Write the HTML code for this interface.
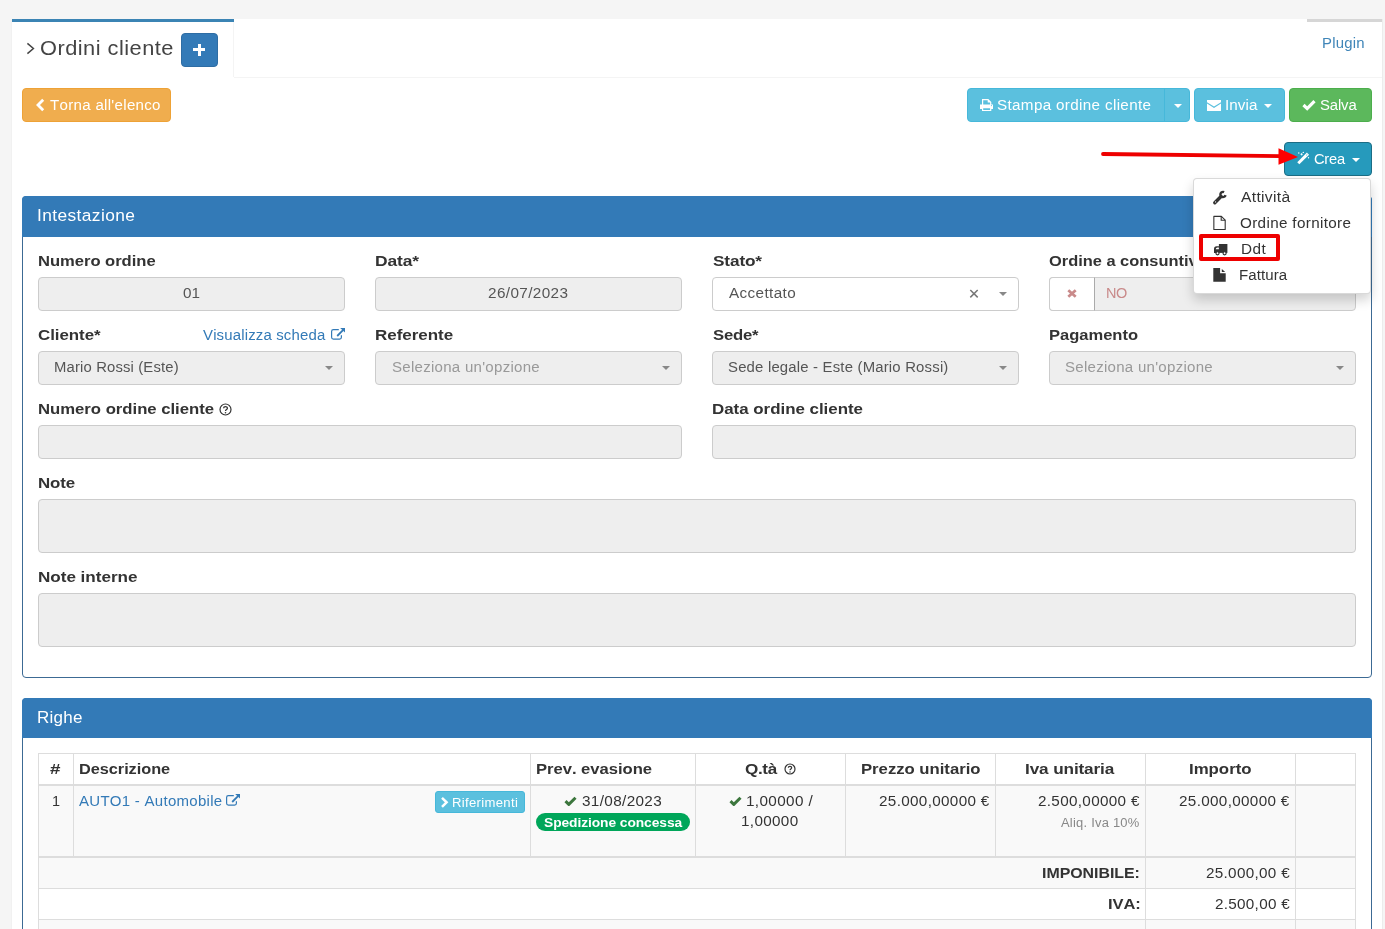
<!DOCTYPE html>
<html><head><meta charset="utf-8"><title>Ordini cliente</title>
<style>
html,body{margin:0;padding:0;}
body{width:1385px;height:929px;overflow:hidden;position:relative;background:#f5f5f5;font-family:"Liberation Sans",sans-serif;font-kerning:none;}
body>div{position:absolute;}
.t{white-space:nowrap;will-change:transform;transform-origin:0 0;}
</style></head><body>
<div style="left:12px;top:19px;width:1370px;height:910px;background:#fff;box-shadow:0 1px 1px rgba(0,0,0,.1);"></div>
<div style="left:1382px;top:19px;width:1px;height:910px;background:#ececec;"></div>
<div style="left:12px;top:19px;width:222px;height:3px;background:#3b84b4;"></div>
<div style="left:233px;top:22px;width:1px;height:55px;background:#f4f4f4;"></div>
<div style="left:234px;top:77px;width:1148px;height:1px;background:#f4f4f4;"></div>
<div style="left:1307px;top:19px;width:75px;height:3px;background:#d6d6d6;"></div>
<div class="t" style="left:1322.37px;top:35.73px;font-size:14.49px;line-height:14.49px;letter-spacing:0.179px;transform:scaleX(1.0320);color:#3f85b8;">Plugin</div>
<svg style="position:absolute;left:26px;top:42px;" width="10" height="14" viewBox="0 0 10 14"><path d="M1.4 1.4L7.4 6.5L1.4 11.6" stroke="#444" stroke-width="1.5" fill="none"/></svg>
<div class="t" style="left:40.27px;top:38.18px;font-size:20.7px;line-height:20.7px;letter-spacing:0.457px;transform:scaleX(1.0533);color:#444;">Ordini cliente</div>
<div style="left:181px;top:33px;width:37px;height:34px;background:#337ab7;border:1px solid #2e6da4;border-radius:4px;box-sizing:border-box;"></div>
<div style="left:193px;top:48px;width:12px;height:3px;background:#fff;"></div>
<div style="left:197.5px;top:44px;width:3.0px;height:11.5px;background:#fff;"></div>
<div style="left:22px;top:88px;width:149px;height:34px;background:#f0ad4e;border:1px solid #eea236;border-radius:4px;box-sizing:border-box;"></div>
<svg style="position:absolute;left:35px;top:98px;" width="11" height="14" viewBox="0 0 11 14"><path d="M8.2 1.8L3 7L8.2 12.2" stroke="#fff" stroke-width="2.8" fill="none"/></svg>
<div class="t" style="left:49.96px;top:98.23px;font-size:14.49px;line-height:14.49px;letter-spacing:0.284px;transform:scaleX(1.0418);color:#fff;">Torna all&#x27;elenco</div>
<div style="left:967px;top:88px;width:223px;height:34px;background:#5bc0de;border:1px solid #46b8da;border-radius:4px;box-sizing:border-box;"></div>
<div style="left:1164px;top:88px;width:1px;height:34px;background:#46b8da;"></div>
<svg style="position:absolute;left:980px;top:99px;" width="13" height="13" viewBox="0 0 13 13"><path fill-rule="evenodd" d="M2 0H8.3L11.3 3V5.6H13V10H11.3V12H2V10H0V5.6H2Z M3.2 1.2V5.6H10.1V3.6H7.7V1.2Z M3.2 9.3V10.9H10.1V9.3Z" fill="#fff"/><circle cx="11.4" cy="6.6" r="0.55" fill="#5bc0de"/></svg>
<div class="t" style="left:997.11px;top:98.23px;font-size:14.49px;line-height:14.49px;letter-spacing:0.324px;transform:scaleX(1.0507);color:#fff;">Stampa ordine cliente</div>
<svg style="position:absolute;left:1173.5px;top:104.0px;" width="8" height="4" viewBox="0 0 8 4"><path d="M0 0H8L4.0 4Z" fill="#fff"/></svg>
<div style="left:1194px;top:88px;width:91px;height:34px;background:#5bc0de;border:1px solid #46b8da;border-radius:4px;box-sizing:border-box;"></div>
<svg style="position:absolute;left:1207px;top:100px;" width="14" height="11" viewBox="0 0 14 11"><path d="M0 0H14V2.2L7 6.6L0 2.2Z M0 3.6L7 8L14 3.6V11H0Z" fill="#fff"/></svg>
<div class="t" style="left:1224.59px;top:98.23px;font-size:14.49px;line-height:14.49px;letter-spacing:0.080px;transform:scaleX(1.0514);color:#fff;">Invia</div>
<svg style="position:absolute;left:1264.0px;top:104.0px;" width="8" height="4" viewBox="0 0 8 4"><path d="M0 0H8L4.0 4Z" fill="#fff"/></svg>
<div style="left:1289px;top:88px;width:83px;height:34px;background:#5cb85c;border:1px solid #4cae4c;border-radius:4px;box-sizing:border-box;"></div>
<svg style="position:absolute;left:1302px;top:99px;" width="14" height="12" viewBox="0 0 14 12"><path d="M1.5 6L5.2 9.6L12.5 2.2" stroke="#fff" stroke-width="3.2" fill="none"/></svg>
<div class="t" style="left:1320.32px;top:98.23px;font-size:14.49px;line-height:14.49px;letter-spacing:-0.129px;transform:scaleX(1.0272);color:#fff;">Salva</div>
<div style="left:1284px;top:142px;width:88px;height:34px;background:#269abc;border:1px solid #1b6d85;border-radius:4px;box-sizing:border-box;"></div>
<svg style="position:absolute;left:1296px;top:150px;" width="16" height="16" viewBox="0 0 16 16"><path d="M2.3 13.3L12 3.6" stroke="#fff" stroke-width="3"/><path d="M10.4 5.2L11.3 4.3" stroke="#269abc" stroke-width="1"/><circle cx="2.8" cy="3" r="0.7" fill="#fff"/><path d="M5.6 3.2V5.4M4.5 4.3H6.7" stroke="#fff" stroke-width="0.9"/><circle cx="7.3" cy="2.4" r="0.7" fill="#fff"/><circle cx="12.5" cy="7.8" r="0.7" fill="#fff"/></svg>
<div class="t" style="left:1313.65px;top:152.23px;font-size:14.49px;line-height:14.49px;letter-spacing:-0.264px;transform:scaleX(1.0161);color:#fff;">Crea</div>
<svg style="position:absolute;left:1351.5px;top:158.0px;" width="8" height="4" viewBox="0 0 8 4"><path d="M0 0H8L4.0 4Z" fill="#fff"/></svg>
<div style="left:22px;top:196px;width:1350px;height:482px;border:1px solid #3c6a94;border-radius:4px;box-sizing:border-box;background:#fff;"></div>
<div style="left:22px;top:196px;width:1350px;height:41px;background:#337ab7;border-radius:4px 4px 0 0;"></div>
<div class="t" style="left:37.10px;top:207.68px;font-size:16.56px;line-height:16.56px;letter-spacing:0.373px;transform:scaleX(1.0488);color:#fff;">Intestazione</div>
<div class="t" style="left:38.18px;top:254.23px;font-size:14.49px;line-height:14.49px;letter-spacing:-0.021px;transform:scaleX(1.1448);color:#333;font-weight:bold;">Numero ordine</div>
<div style="left:38px;top:277px;width:307px;height:34px;background:#eee;border:1px solid #ccc;border-radius:4px;box-sizing:border-box;"></div>
<div class="t" style="left:182.92px;top:285.73px;font-size:14.49px;line-height:14.49px;letter-spacing:-0.024px;transform:scaleX(1.0526);color:#555;">01</div>
<div class="t" style="left:375.12px;top:254.23px;font-size:14.49px;line-height:14.49px;letter-spacing:-0.080px;transform:scaleX(1.2020);color:#333;font-weight:bold;">Data*</div>
<div style="left:375px;top:277px;width:307px;height:34px;background:#eee;border:1px solid #ccc;border-radius:4px;box-sizing:border-box;"></div>
<div class="t" style="left:488.41px;top:285.73px;font-size:14.49px;line-height:14.49px;letter-spacing:0.356px;transform:scaleX(1.0563);color:#555;">26/07/2023</div>
<div class="t" style="left:712.51px;top:254.23px;font-size:14.49px;line-height:14.49px;letter-spacing:-0.130px;transform:scaleX(1.1909);color:#333;font-weight:bold;">Stato*</div>
<div style="left:712px;top:277px;width:307px;height:34px;background:#fff;border:1px solid #ccc;border-radius:4px;box-sizing:border-box;"></div>
<div class="t" style="left:728.97px;top:285.73px;font-size:14.49px;line-height:14.49px;letter-spacing:0.364px;transform:scaleX(1.0542);color:#555;">Accettato</div>
<svg style="position:absolute;left:969px;top:289px;" width="10" height="10" viewBox="0 0 10 10"><path d="M1.3 1L8.7 8.4M8.7 1L1.3 8.4" stroke="#777" stroke-width="1.5"/></svg>
<svg style="position:absolute;left:999.0px;top:291.5px;" width="8" height="4" viewBox="0 0 8 4"><path d="M0 0H8L4.0 4Z" fill="#888"/></svg>
<div class="t" style="left:1049.02px;top:254.23px;font-size:14.49px;line-height:14.49px;letter-spacing:0.001px;transform:scaleX(1.1326);color:#333;font-weight:bold;">Ordine a consuntivo</div>
<div style="left:1049px;top:277px;width:307px;height:34px;background:#eee;border:1px solid #ccc;border-radius:4px;box-sizing:border-box;"></div>
<div style="left:1049px;top:277px;width:46px;height:34px;background:#fff;border:1px solid #ccc;border-right:1px solid #aaa;border-radius:4px 0 0 4px;box-sizing:border-box;"></div>
<svg style="position:absolute;left:1066px;top:288px;" width="12" height="11" viewBox="0 0 12 11"><path d="M2.3 2.3L9.7 8.7M9.7 2.3L2.3 8.7" stroke="#c98a8a" stroke-width="2.8"/></svg>
<div class="t" style="left:1106.32px;top:285.73px;font-size:14.49px;line-height:14.49px;letter-spacing:-0.412px;transform:scaleX(0.9944);color:#c98a8a;">NO</div>
<div class="t" style="left:38.00px;top:328.23px;font-size:14.49px;line-height:14.49px;letter-spacing:-0.033px;transform:scaleX(1.1649);color:#333;font-weight:bold;">Cliente*</div>
<div class="t" style="left:203.43px;top:328.23px;font-size:14.49px;line-height:14.49px;letter-spacing:0.151px;transform:scaleX(1.0330);color:#337ab7;">Visualizza scheda</div>
<svg style="position:absolute;left:330px;top:327px;" width="16" height="14" viewBox="0 0 16 14"><path d="M8.8 2.6H3.4Q1.6 2.6 1.6 4.4V10.3Q1.6 12.1 3.4 12.1H9.6Q11.4 12.1 11.4 10.3V8.2" stroke="#337ab7" stroke-width="1.2" fill="none"/><path d="M10.2 1H15V5.6Z" fill="#337ab7"/><path d="M7.2 9L13 3.2" stroke="#337ab7" stroke-width="1.8"/></svg>
<div style="left:38px;top:351px;width:307px;height:34px;background:#eee;border:1px solid #ccc;border-radius:4px;box-sizing:border-box;"></div>
<div class="t" style="left:54.28px;top:359.73px;font-size:14.49px;line-height:14.49px;letter-spacing:0.145px;transform:scaleX(1.0248);color:#555;">Mario Rossi (Este)</div>
<svg style="position:absolute;left:325.0px;top:366.0px;" width="8" height="4" viewBox="0 0 8 4"><path d="M0 0H8L4.0 4Z" fill="#888"/></svg>
<div class="t" style="left:375.15px;top:328.23px;font-size:14.49px;line-height:14.49px;letter-spacing:-0.026px;transform:scaleX(1.1732);color:#333;font-weight:bold;">Referente</div>
<div style="left:375px;top:351px;width:307px;height:34px;background:#eee;border:1px solid #ccc;border-radius:4px;box-sizing:border-box;"></div>
<div class="t" style="left:391.82px;top:359.73px;font-size:14.49px;line-height:14.49px;letter-spacing:0.256px;transform:scaleX(1.0391);color:#999;">Seleziona un&#x27;opzione</div>
<svg style="position:absolute;left:662.0px;top:366.0px;" width="8" height="4" viewBox="0 0 8 4"><path d="M0 0H8L4.0 4Z" fill="#888"/></svg>
<div class="t" style="left:712.52px;top:328.23px;font-size:14.49px;line-height:14.49px;letter-spacing:-0.171px;transform:scaleX(1.1526);color:#333;font-weight:bold;">Sede*</div>
<div style="left:712px;top:351px;width:307px;height:34px;background:#eee;border:1px solid #ccc;border-radius:4px;box-sizing:border-box;"></div>
<div class="t" style="left:728.32px;top:359.73px;font-size:14.49px;line-height:14.49px;letter-spacing:0.177px;transform:scaleX(1.0297);color:#555;">Sede legale - Este (Mario Rossi)</div>
<svg style="position:absolute;left:999.0px;top:366.0px;" width="8" height="4" viewBox="0 0 8 4"><path d="M0 0H8L4.0 4Z" fill="#888"/></svg>
<div class="t" style="left:1049.18px;top:328.23px;font-size:14.49px;line-height:14.49px;letter-spacing:-0.015px;transform:scaleX(1.1416);color:#333;font-weight:bold;">Pagamento</div>
<div style="left:1049px;top:351px;width:307px;height:34px;background:#eee;border:1px solid #ccc;border-radius:4px;box-sizing:border-box;"></div>
<div class="t" style="left:1065.32px;top:359.73px;font-size:14.49px;line-height:14.49px;letter-spacing:0.256px;transform:scaleX(1.0391);color:#999;">Seleziona un&#x27;opzione</div>
<svg style="position:absolute;left:1336.0px;top:366.0px;" width="8" height="4" viewBox="0 0 8 4"><path d="M0 0H8L4.0 4Z" fill="#888"/></svg>
<div class="t" style="left:38.17px;top:402.23px;font-size:14.49px;line-height:14.49px;letter-spacing:-0.012px;transform:scaleX(1.1530);color:#333;font-weight:bold;">Numero ordine cliente</div>
<svg style="position:absolute;left:219px;top:403px;" width="13" height="13" viewBox="0 0 13 13"><circle cx="6.5" cy="6.5" r="5.5" stroke="#333" stroke-width="1.2" fill="none"/><path d="M4.6 5.2C4.6 3.2 8.4 3.2 8.4 5.2C8.4 6.6 6.5 6.5 6.5 8" stroke="#333" stroke-width="1.3" fill="none"/><circle cx="6.5" cy="9.8" r="0.8" fill="#333"/></svg>
<div style="left:38px;top:425px;width:644px;height:34px;background:#eee;border:1px solid #ccc;border-radius:4px;box-sizing:border-box;"></div>
<div class="t" style="left:712.15px;top:402.23px;font-size:14.49px;line-height:14.49px;letter-spacing:-0.012px;transform:scaleX(1.1671);color:#333;font-weight:bold;">Data ordine cliente</div>
<div style="left:712px;top:425px;width:644px;height:34px;background:#eee;border:1px solid #ccc;border-radius:4px;box-sizing:border-box;"></div>
<div class="t" style="left:38.16px;top:476.23px;font-size:14.49px;line-height:14.49px;letter-spacing:-0.073px;transform:scaleX(1.1653);color:#333;font-weight:bold;">Note</div>
<div style="left:38px;top:499px;width:1318px;height:54px;background:#eee;border:1px solid #ccc;border-radius:4px;box-sizing:border-box;"></div>
<div class="t" style="left:38.14px;top:570.23px;font-size:14.49px;line-height:14.49px;letter-spacing:-0.018px;transform:scaleX(1.1796);color:#333;font-weight:bold;">Note interne</div>
<div style="left:38px;top:593px;width:1318px;height:54px;background:#eee;border:1px solid #ccc;border-radius:4px;box-sizing:border-box;"></div>
<div style="left:22px;top:698px;width:1350px;height:262px;border:1px solid #3c6a94;border-radius:4px;box-sizing:border-box;background:#fff;"></div>
<div style="left:22px;top:698px;width:1350px;height:40px;background:#337ab7;border-radius:4px 4px 0 0;"></div>
<div class="t" style="left:37.40px;top:709.98px;font-size:16.56px;line-height:16.56px;letter-spacing:0.231px;transform:scaleX(1.0281);color:#fff;">Righe</div>
<div style="left:38px;top:753px;width:1318px;height:33px;background:#fff;"></div>
<div style="left:38px;top:786px;width:1318px;height:72px;background:#f9f9f9;"></div>
<div style="left:38px;top:858px;width:1318px;height:31px;background:#f9f9f9;"></div>
<div style="left:38px;top:889px;width:1318px;height:31px;background:#fff;"></div>
<div style="left:38px;top:920px;width:1318px;height:40px;background:#f9f9f9;"></div>
<div style="left:38px;top:753px;width:1318px;height:1px;background:#ddd;"></div>
<div style="left:38px;top:784px;width:1318px;height:2px;background:#ddd;"></div>
<div style="left:38px;top:856px;width:1318px;height:2px;background:#ddd;"></div>
<div style="left:38px;top:888px;width:1318px;height:1px;background:#ddd;"></div>
<div style="left:38px;top:919px;width:1318px;height:1px;background:#ddd;"></div>
<div style="left:38px;top:753px;width:1px;height:207px;background:#ddd;"></div>
<div style="left:1355px;top:753px;width:1px;height:207px;background:#ddd;"></div>
<div style="left:73px;top:753px;width:1px;height:105px;background:#ddd;"></div>
<div style="left:530px;top:753px;width:1px;height:105px;background:#ddd;"></div>
<div style="left:695px;top:753px;width:1px;height:105px;background:#ddd;"></div>
<div style="left:845px;top:753px;width:1px;height:105px;background:#ddd;"></div>
<div style="left:995px;top:753px;width:1px;height:105px;background:#ddd;"></div>
<div style="left:1145px;top:753px;width:1px;height:207px;background:#ddd;"></div>
<div style="left:1295px;top:753px;width:1px;height:207px;background:#ddd;"></div>
<div class="t" style="left:50.26px;top:761.73px;font-size:14.49px;line-height:14.49px;letter-spacing:0.000px;transform:scaleX(1.2973);color:#333;font-weight:bold;">#</div>
<div class="t" style="left:79.19px;top:761.73px;font-size:14.49px;line-height:14.49px;letter-spacing:-0.028px;transform:scaleX(1.1247);color:#333;font-weight:bold;">Descrizione</div>
<div class="t" style="left:535.89px;top:761.73px;font-size:14.49px;line-height:14.49px;letter-spacing:-0.019px;transform:scaleX(1.1464);color:#333;font-weight:bold;">Prev. evasione</div>
<div class="t" style="left:745.42px;top:761.73px;font-size:14.49px;line-height:14.49px;letter-spacing:-0.320px;transform:scaleX(1.1838);color:#333;font-weight:bold;">Q.tà</div>
<svg style="position:absolute;left:783.5px;top:763px;" width="12" height="12" viewBox="0 0 12 12"><circle cx="6" cy="6" r="5" stroke="#333" stroke-width="1.2" fill="none"/><path d="M4.3 4.8C4.3 3 7.7 3 7.7 4.8C7.7 6 6 6 6 7.3" stroke="#333" stroke-width="1.2" fill="none"/><circle cx="6" cy="9" r="0.75" fill="#333"/></svg>
<div class="t" style="left:860.51px;top:761.73px;font-size:14.49px;line-height:14.49px;letter-spacing:-0.007px;transform:scaleX(1.1520);color:#333;font-weight:bold;">Prezzo unitario</div>
<div class="t" style="left:1025.20px;top:761.73px;font-size:14.49px;line-height:14.49px;letter-spacing:-0.103px;transform:scaleX(1.1853);color:#333;font-weight:bold;">Iva unitaria</div>
<div class="t" style="left:1188.99px;top:761.73px;font-size:14.49px;line-height:14.49px;letter-spacing:-0.015px;transform:scaleX(1.1618);color:#333;font-weight:bold;">Importo</div>
<div class="t" style="left:51.51px;top:793.73px;font-size:14.49px;line-height:14.49px;letter-spacing:0.000px;transform:scaleX(0.9727);color:#333;">1</div>
<div class="t" style="left:79.08px;top:793.73px;font-size:14.49px;line-height:14.49px;letter-spacing:0.264px;transform:scaleX(1.0363);color:#337ab7;">AUTO1 - Automobile</div>
<svg style="position:absolute;left:225px;top:793px;" width="16" height="14" viewBox="0 0 16 14"><path d="M8.8 2.6H3.4Q1.6 2.6 1.6 4.4V10.3Q1.6 12.1 3.4 12.1H9.6Q11.4 12.1 11.4 10.3V8.2" stroke="#337ab7" stroke-width="1.2" fill="none"/><path d="M10.2 1H15V5.6Z" fill="#337ab7"/><path d="M7.2 9L13 3.2" stroke="#337ab7" stroke-width="1.8"/></svg>
<div style="left:435px;top:791px;width:90px;height:22px;background:#5bc0de;border:1px solid #46b8da;border-radius:3px;box-sizing:border-box;"></div>
<svg style="position:absolute;left:440px;top:796px;" width="9" height="13" viewBox="0 0 9 13"><path d="M2 1.8L6.6 6.3L2 10.8" stroke="#fff" stroke-width="2.5" fill="none"/></svg>
<div class="t" style="left:451.92px;top:797.49px;font-size:12.42px;line-height:12.42px;letter-spacing:0.294px;transform:scaleX(1.0582);color:#fff;">Riferimenti</div>
<svg style="position:absolute;left:564px;top:796px;" width="13" height="11" viewBox="0 0 13 11"><path d="M1.5 5.2L4.8 8.4L11.5 1.8" stroke="#3c763d" stroke-width="3" fill="none" stroke-linejoin="round"/></svg>
<div class="t" style="left:581.92px;top:793.73px;font-size:14.49px;line-height:14.49px;letter-spacing:0.332px;transform:scaleX(1.0563);color:#333;">31/08/2023</div>
<div style="left:536px;top:813px;width:154px;height:18px;background:#00a65a;border-radius:9px;"></div>
<div class="t" style="left:543.56px;top:816.99px;font-size:12.42px;line-height:12.42px;letter-spacing:-0.075px;transform:scaleX(1.1129);color:#fff;font-weight:bold;">Spedizione concessa</div>
<svg style="position:absolute;left:728.5px;top:796px;" width="13" height="11" viewBox="0 0 13 11"><path d="M1.5 5.2L4.8 8.4L11.5 1.8" stroke="#3c763d" stroke-width="3" fill="none" stroke-linejoin="round"/></svg>
<div class="t" style="left:746.34px;top:793.73px;font-size:14.49px;line-height:14.49px;letter-spacing:0.349px;transform:scaleX(1.0549);color:#333;">1,00000 /</div>
<div class="t" style="left:741.43px;top:813.73px;font-size:14.49px;line-height:14.49px;letter-spacing:0.324px;transform:scaleX(1.0527);color:#333;">1,00000</div>
<div class="t" style="left:878.93px;top:793.73px;font-size:14.49px;line-height:14.49px;letter-spacing:0.317px;transform:scaleX(1.0527);color:#333;">25.000,00000 €</div>
<div class="t" style="left:1037.83px;top:793.73px;font-size:14.49px;line-height:14.49px;letter-spacing:0.309px;transform:scaleX(1.0527);color:#333;">2.500,00000 €</div>
<div class="t" style="left:1061.46px;top:816.79px;font-size:12.42px;line-height:12.42px;letter-spacing:0.223px;transform:scaleX(1.0422);color:#888;">Aliq. Iva 10%</div>
<div class="t" style="left:1178.93px;top:793.73px;font-size:14.49px;line-height:14.49px;letter-spacing:0.317px;transform:scaleX(1.0527);color:#333;">25.000,00000 €</div>
<div class="t" style="left:1042.03px;top:865.73px;font-size:14.49px;line-height:14.49px;letter-spacing:-0.023px;transform:scaleX(1.0989);color:#333;font-weight:bold;">IMPONIBILE:</div>
<div class="t" style="left:1205.65px;top:865.73px;font-size:14.49px;line-height:14.49px;letter-spacing:0.291px;transform:scaleX(1.0527);color:#333;">25.000,00 €</div>
<div class="t" style="left:1108.39px;top:896.73px;font-size:14.49px;line-height:14.49px;letter-spacing:-0.046px;transform:scaleX(1.1391);color:#333;font-weight:bold;">IVA:</div>
<div class="t" style="left:1214.56px;top:896.73px;font-size:14.49px;line-height:14.49px;letter-spacing:0.278px;transform:scaleX(1.0527);color:#333;">2.500,00 €</div>
<div style="left:1193px;top:178px;width:178px;height:116px;background:#fff;border:1px solid rgba(0,0,0,.15);border-radius:4px;box-sizing:border-box;box-shadow:0 6px 12px rgba(0,0,0,.175);"></div>
<svg style="position:absolute;left:1208px;top:186px;" width="24" height="22" viewBox="0 0 24 22"><path d="M6.8 16.7L13 10.5" stroke="#333" stroke-width="3.4" stroke-linecap="round"/><path d="M17.51 9.17A2.6 2.6 0 1 1 16.10 6.14" stroke="#333" stroke-width="2.4" fill="none"/><circle cx="7.6" cy="15.9" r="0.6" fill="#fff"/></svg>
<div class="t" style="left:1241.47px;top:189.73px;font-size:14.49px;line-height:14.49px;letter-spacing:0.282px;transform:scaleX(1.0800);color:#333;">Attività</div>
<svg style="position:absolute;left:1213px;top:215px;" width="14" height="16" viewBox="0 0 14 16"><path d="M0.85 1.4H8.4L12.2 5.2V14.5H0.85Z" stroke="#333" stroke-width="1.1" fill="none" stroke-linejoin="round"/><path d="M8.2 1.4V5.3H12.2" stroke="#333" stroke-width="1.1" fill="none"/></svg>
<div class="t" style="left:1239.78px;top:215.73px;font-size:14.49px;line-height:14.49px;letter-spacing:0.323px;transform:scaleX(1.0519);color:#333;">Ordine fornitore</div>
<svg style="position:absolute;left:1213px;top:243px;" width="16" height="13" viewBox="0 0 16 13"><path d="M5.9 1H14.4V9.9H5.9Z" fill="#333"/><path d="M1 9.9V5.8Q1 3.2 3.5 3.2H6V9.9Z" fill="#333"/><path d="M2.7 6.3Q2.9 4.5 4.3 4.5H5.9V6.3Z" fill="#fff"/><circle cx="4.5" cy="10.3" r="1.55" fill="#fff" stroke="#333" stroke-width="1.2"/><circle cx="11.6" cy="10.3" r="1.55" fill="#fff" stroke="#333" stroke-width="1.2"/></svg>
<div class="t" style="left:1241.24px;top:241.73px;font-size:14.49px;line-height:14.49px;letter-spacing:0.456px;transform:scaleX(1.0578);color:#333;">Ddt</div>
<svg style="position:absolute;left:1213px;top:267px;" width="14" height="16" viewBox="0 0 14 16"><path d="M0.3 1H7.1V6.2H12.7V14.65H0.3Z" fill="#333"/><path d="M8.8 2L12.2 5H8.8Z" fill="#333"/></svg>
<div class="t" style="left:1239.26px;top:267.73px;font-size:14.49px;line-height:14.49px;letter-spacing:0.065px;transform:scaleX(1.0395);color:#333;">Fattura</div>
<div style="left:1199px;top:234px;width:81px;height:27px;border:4px solid #ee0000;border-radius:2px;box-sizing:border-box;"></div>
<svg style="position:absolute;left:1095px;top:140px;" width="210" height="30" viewBox="0 0 210 30"><path d="M8 14L186 16.2" stroke="#ee0000" stroke-width="3.8" stroke-linecap="round"/><path d="M183.5 8.2L203 16.9L183.5 24.7Z" fill="#ff0000"/></svg>
</body></html>
